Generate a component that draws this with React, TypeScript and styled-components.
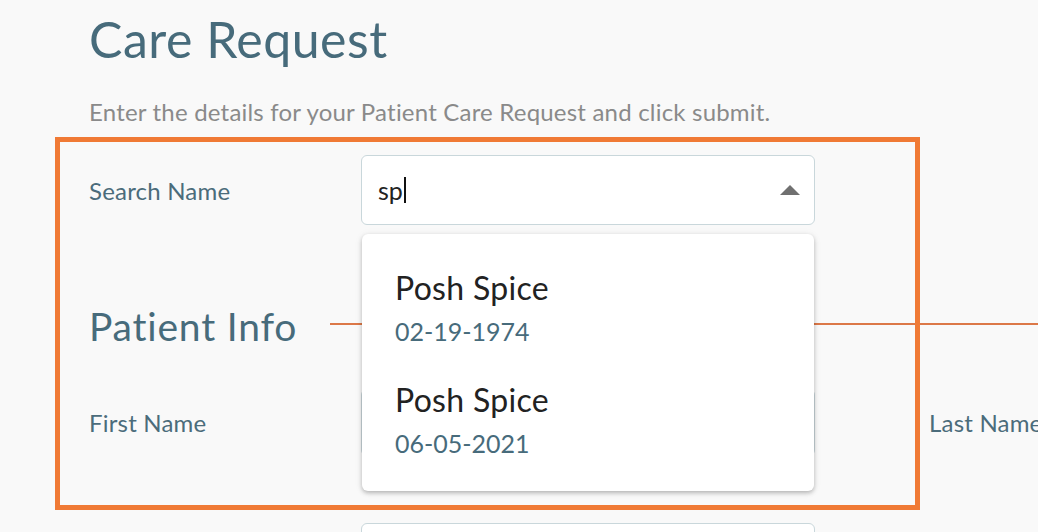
import React from "react";
import styled, { createGlobalStyle } from "styled-components";

const Global = createGlobalStyle`
  html, body { margin: 0; padding: 0; background: #f9f9f9; overflow: hidden; }
  body { font-family: Lato, "Noto Sans", sans-serif; }
`;

const Page = styled.div`
  position: relative;
  width: 1200px;
  padding: 13px 0 0 89px;
  box-sizing: border-box;
`;

const Title = styled.h1`
  margin: 0;
  font-size: 50px;
  line-height: 52px;
  font-weight: 400;
  color: #476b7b;
  letter-spacing: 0.5px;
`;

const Subtitle = styled.p`
  margin: 32px 0 0;
  font-size: 24px;
  line-height: 30px;
  color: #8a8a8a;
  letter-spacing: 0.2px;
`;

const Row = styled.div<{ $top: number }>`
  display: grid;
  grid-template-columns: 272px 454px 114px auto;
  align-items: center;
  margin-top: ${(p) => p.$top}px;
`;

const Label = styled.label`
  font-size: 24px;
  color: #4b6c7b;
  letter-spacing: 0.2px;
`;

const FieldWrap = styled.div`
  position: relative;
`;

const Field = styled.div<{ $h: number }>`
  height: ${(p) => p.$h}px;
  box-sizing: border-box;
  background: #fff;
  border: 1.5px solid #c9d7db;
  border-radius: 6px;
  display: flex;
  align-items: center;
  padding: 0 14px 0 16px;
`;

const Value = styled.span`
  flex: 1;
  font-size: 25px;
  color: #222;
  display: flex;
  align-items: center;
`;

const Caret = styled.span`
  display: inline-block;
  width: 2px;
  height: 26px;
  background: #111;
  margin-left: 1px;
`;

const Menu = styled.ul`
  position: absolute;
  top: calc(100% + 9px);
  left: 1px;
  right: 1px;
  margin: 0;
  padding: 19px 0 14px;
  list-style: none;
  background: #fff;
  border-radius: 6px;
  box-shadow: 0 2px 4px rgba(0, 0, 0, 0.25), 0 1px 10px rgba(0, 0, 0, 0.06);
  z-index: 2;
`;

const Option = styled.li`
  padding: 13px 33px;
  display: flex;
  flex-direction: column;
`;

const OptName = styled.span`
  font-size: 32px;
  line-height: 44px;
  color: #222;
  letter-spacing: 0.3px;
`;

const OptDate = styled.span`
  font-size: 25px;
  line-height: 42px;
  color: #476b7b;
`;

const SectionHead = styled.div`
  display: flex;
  align-items: center;
  gap: 33px;
  margin-top: 79px;
  margin-right: -200px;
`;

const SectionTitle = styled.h2`
  margin: 0;
  font-size: 39px;
  line-height: 44px;
  font-weight: 400;
  color: #476b7b;
  letter-spacing: 0.8px;
`;

const Rule = styled.div`
  flex: 1;
  height: 2px;
  background: #dc7848;
  margin-top: -5px;
`;

const Highlight = styled.div`
  position: absolute;
  left: 55px;
  top: 137px;
  width: 865px;
  height: 373px;
  box-sizing: border-box;
  border: 5px solid #f07a35;
  pointer-events: none;
  z-index: 3;
`;

const ArrowUp = () => (
  <svg width="20" height="10" viewBox="0 0 20 10">
    <polygon points="0,10 10,0 20,10" fill="#707070" />
  </svg>
);

const options = [
  { name: "Posh Spice", dob: "02-19-1974" },
  { name: "Posh Spice", dob: "06-05-2021" },
];

export default function App() {
  return (
    <>
      <Global />
      <Page>
        <Title>Care Request</Title>
        <Subtitle>Enter the details for your Patient Care Request and click submit.</Subtitle>
        <Row $top={28}>
          <Label>Search Name</Label>
          <FieldWrap>
            <Field $h={70}>
              <Value>
                sp
                <Caret />
              </Value>
              <ArrowUp />
            </Field>
            <Menu>
              {options.map((o, i) => (
                <Option key={i}>
                  <OptName>{o.name}</OptName>
                  <OptDate>{o.dob}</OptDate>
                </Option>
              ))}
            </Menu>
          </FieldWrap>
        </Row>
        <SectionHead>
          <SectionTitle>Patient Info</SectionTitle>
          <Rule />
        </SectionHead>
        <Row $top={41}>
          <Label>First Name</Label>
          <Field $h={67} />
          <span />
          <Label>Last Name</Label>
        </Row>
        <Row $top={67}>
          <span />
          <Field $h={67} />
        </Row>
        <Highlight />
      </Page>
    </>
  );
}
